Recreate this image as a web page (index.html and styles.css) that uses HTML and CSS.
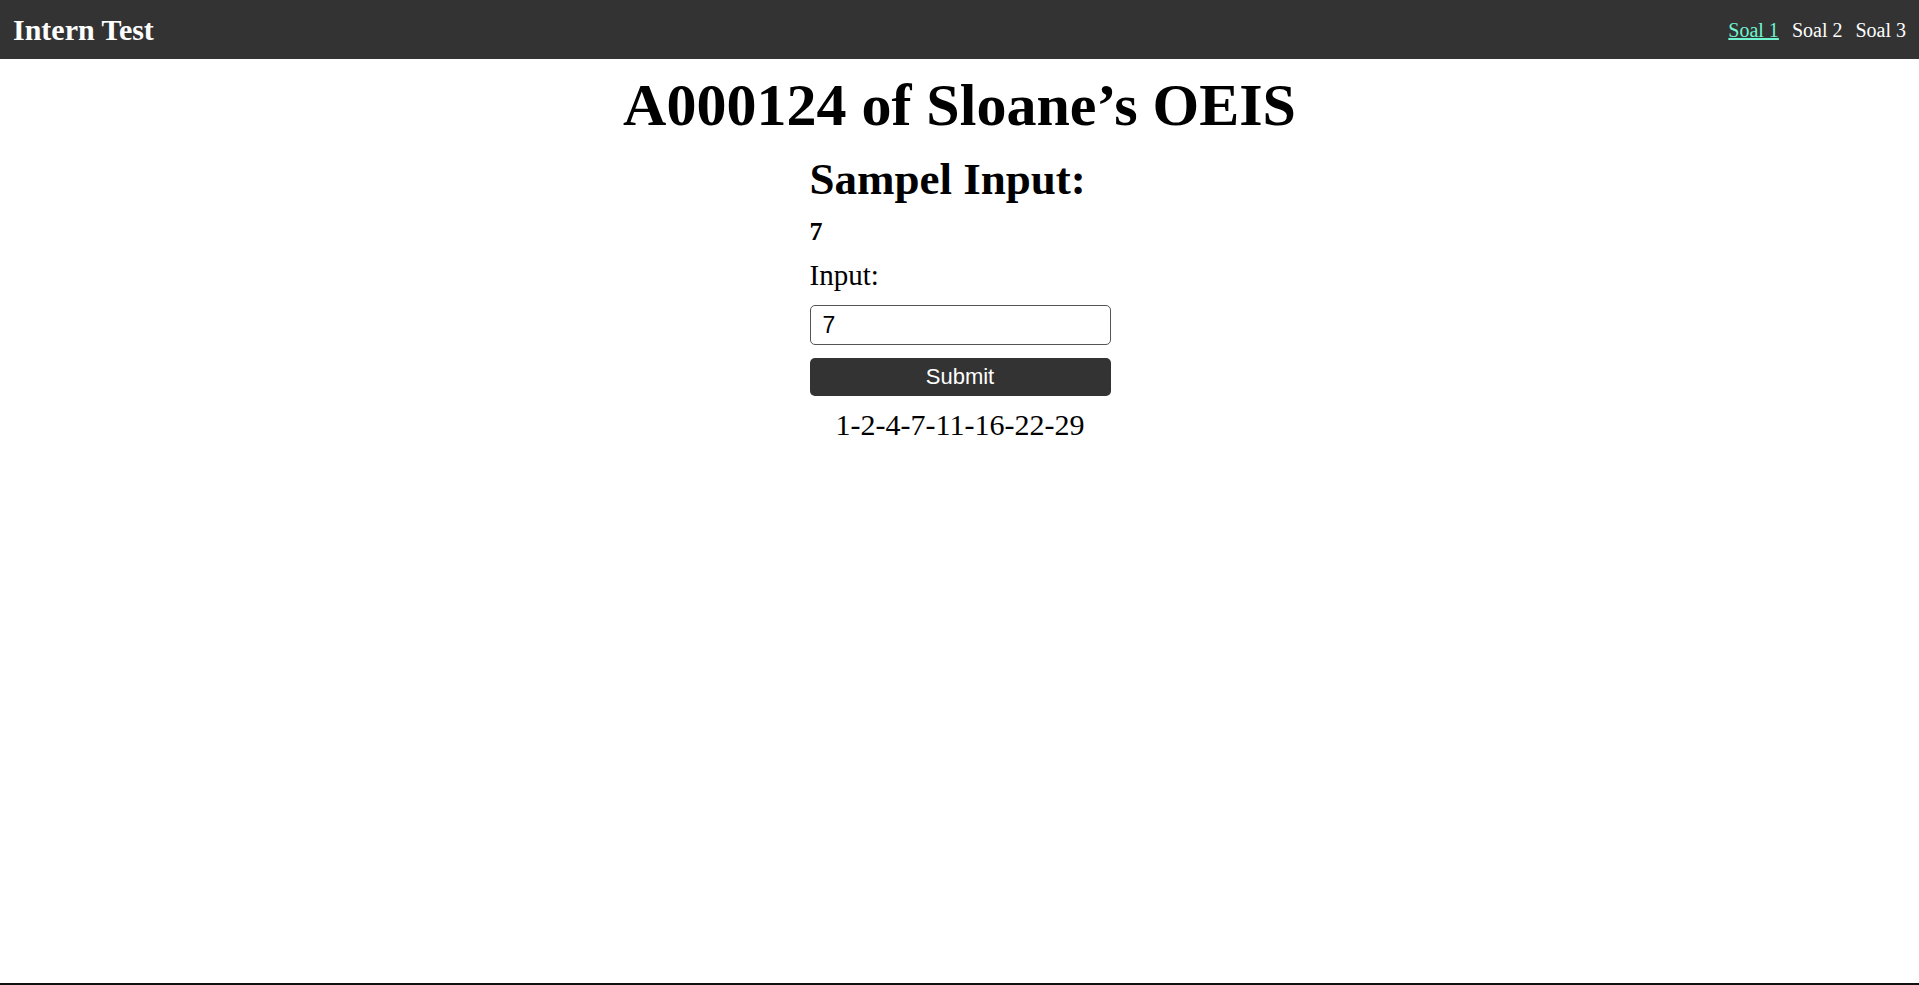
FILE: index.html
```html
<!DOCTYPE html>
<html lang="en">
<head>
<meta charset="utf-8">
<title>Intern Test</title>
<link rel="stylesheet" href="styles.css">
</head>
<body>
<nav class="navbar">
  <span class="brand">Intern Test</span>
  <div class="nav-links">
    <a class="nav-link active" href="#">Soal 1</a>
    <a class="nav-link" href="#">Soal 2</a>
    <a class="nav-link" href="#">Soal 3</a>
  </div>
</nav>
<main class="main">
  <h1 class="title">A000124 of Sloane’s OEIS</h1>
  <div class="panel">
    <h2 class="sample-title">Sampel Input:</h2>
    <div class="sample-value">7</div>
    <label class="input-label" for="n">Input:</label>
    <input class="text-input" id="n" type="text" value="7">
    <button class="submit-btn" type="button">Submit</button>
    <div class="result">1-2-4-7-11-16-22-29</div>
  </div>
</main>
<footer class="footer"></footer>
</body>
</html>
```

FILE: styles.css
```css
html, body {
  margin: 0;
  padding: 0;
}
body {
  min-height: 100vh;
  display: flex;
  flex-direction: column;
  font-family: "Liberation Serif", "Times New Roman", serif;
  color: #000;
  background: #fff;
  line-height: 1.15;
}
.navbar {
  height: 59px;
  background: #333333;
  display: flex;
  align-items: center;
  justify-content: space-between;
  padding: 0 13px;
  box-sizing: border-box;
}
.brand {
  color: #fff;
  font-weight: bold;
  font-size: 30px;
  margin-top: 2px;
}
.nav-links {
  display: flex;
  gap: 13px;
  margin-top: 1px;
}
.nav-link {
  color: #fff;
  text-decoration: none;
  font-size: 20px;
}
.nav-link.active {
  color: #6ff5cf;
  text-decoration: underline;
}
.main {
  flex: 1;
  display: flex;
  flex-direction: column;
  align-items: center;
}
.title {
  font-size: 60px;
  font-weight: bold;
  margin: 12px 0 0;
  line-height: 69px;
}
.panel {
  width: 301px;
  display: flex;
  flex-direction: column;
  margin-left: 1px;
}
.sample-title {
  font-size: 45px;
  font-weight: bold;
  margin: 13px 0 0;
  line-height: 52px;
  white-space: nowrap;
}
.sample-value {
  font-size: 26px;
  font-weight: bold;
  margin-top: 12px;
  line-height: 30px;
}
.input-label {
  font-size: 29px;
  margin-top: 12px;
  line-height: 33px;
}
.text-input {
  margin-top: 13px;
  height: 40px;
  box-sizing: border-box;
  border: 1px solid #555;
  border-radius: 5px;
  padding: 0 12px;
  font-family: "Liberation Sans", Arial, sans-serif;
  font-size: 23px;
  color: #000;
  outline: none;
}
.submit-btn {
  margin-top: 13px;
  height: 38px;
  border: none;
  border-radius: 5px;
  background: #333333;
  color: #fff;
  font-family: "Liberation Sans", Arial, sans-serif;
  font-size: 22px;
  cursor: pointer;
  padding: 0;
}
.result {
  font-size: 30px;
  text-align: center;
  margin-top: 12px;
  line-height: 34px;
}
.footer {
  border-top: 2px solid #111;
}
```
